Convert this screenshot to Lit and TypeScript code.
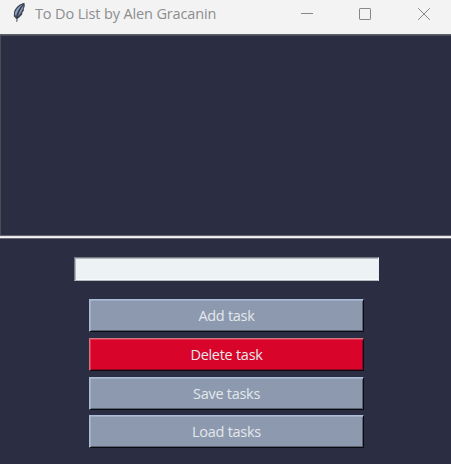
import { LitElement, html, svg, css } from "lit";
import { customElement, property } from "lit/decorators.js";

@customElement("title-bar")
export class TitleBar extends LitElement {
  static styles = css`
    :host { display: flex; height: 34px; background: #f3f3f3; color: #8d8d8f; }
    .feather { width: 14px; height: 24px; margin-left: 12px; flex: none; }
    .title {
      margin-left: 9px; height: 28px; white-space: nowrap;
      font: 14.5px/28px "Open Sans", "Noto Sans", sans-serif; letter-spacing: -0.14px;
    }
    .controls { display: flex; margin-left: auto; margin-right: -2px; }
    .controls svg { width: 58.5px; height: 28px; display: block; }
  `;
  render() {
    return html`
      <svg class="feather" viewBox="0 0 14 24">
        <path d="M12.4 2.8 C8 3.8 3.3 7.2 2 12.2 L1.8 16.2 L4.3 19 L6.8 18 L10.2 14.6 L10.3 12.7 L12 10.2 L11.7 9 L12.8 6 Z" fill="#3b4556"/>
        <path d="M10.6 4.4 C6.6 6.2 3.6 9.6 2.9 13.4 L3.9 16.6 C5 11.5 7.5 8 10.6 4.4 Z" fill="#8ba0bc"/>
        <path d="M11.7 5.2 L10.6 9.6 L8.7 13 L6.2 16.2 L5.3 16.4 C6.4 12 8.8 8 11.7 5.2 Z" fill="#8295af"/>
        <path d="M10.8 5 C7.6 9 5.6 13.5 4.7 21.8" fill="none" stroke="#303846" stroke-width="0.9"/>
      </svg>
      <span class="title">To Do List by Alen Gracanin</span>
      <div class="controls">
        ${[
          svg`<path d="M23 13.5H35"/>`,
          svg`<rect x="23.5" y="8.5" width="11" height="11" rx="0.6"/>`,
          svg`<path d="M23.2 8.2L34.8 19.8M34.8 8.2L23.2 19.8"/>`,
        ].map((g) => html`<svg viewBox="0 0 58.5 28" fill="none" stroke="#858789">${g}</svg>`)}
      </div>
    `;
  }
}

@customElement("task-button")
export class TaskButton extends LitElement {
  @property() label = "";
  @property({ reflect: true }) tone = "plain";
  static styles = css`
    :host { display: block; height: 33px; }
    .face {
      box-sizing: border-box; width: 100%; height: 33px; display: block; margin: 0; padding: 0;
      border: 1px solid; border-color: #a9bbd6 #090a10 #090a10 #a9bbd6; border-radius: 0;
      background: #8d99af; color: #e3e8ec; text-align: center;
      box-shadow: inset 1px 1px #9fadc5, inset -1px -1px #596273;
      font: 14.5px/30px "Open Sans", "Noto Sans", sans-serif; letter-spacing: -0.28px;
    }
    :host([tone="danger"]) .face {
      background: #d90429; border-color: #d5747f #160810 #160810 #d5747f;
      box-shadow: inset 1px 1px #df3650, inset -1px -1px #850820;
    }
  `;
  render() {
    return html`<button class="face">${this.label}</button>`;
  }
}

@customElement("app-root")
export class AppRoot extends LitElement {
  static styles = css`
    :host { display: flex; flex-direction: column; height: 464px; background: #2b2d42; overflow: hidden; }
    .list {
      box-sizing: border-box; height: 205px; flex: none;
      border-top: 1px solid #5b6168; border-bottom: 1px solid #666773;
      box-shadow: inset 0 -1px #f4f4f5, inset 0 -2px #e2e2e5, inset 0 -3px #626370, inset 1px 1px #4a4d58;
    }
    .entry {
      box-sizing: border-box; width: 305px; height: 24px; margin: 18px 0 0 74px; flex: none; padding: 0 4px;
      border: 1px solid; border-color: #777982 #e9edf0 #b5b7bc #777982; border-radius: 0; outline: none;
      background: #edf2f4; box-shadow: inset 1px 1px #b5b8bc, inset 0 -1px #fafbfc;
      font: 14px "Open Sans", sans-serif;
    }
    .actions { display: flex; flex-direction: column; gap: 6px; width: 275px; margin: 18px 0 0 89px; }
    .actions task-button:last-child { margin-top: -1px; }
  `;
  render() {
    return html`
      <title-bar></title-bar>
      <div class="list"></div>
      <input class="entry" type="text" />
      <div class="actions">
        <task-button label="Add task"></task-button>
        <task-button label="Delete task" tone="danger"></task-button>
        <task-button label="Save tasks"></task-button>
        <task-button label="Load tasks"></task-button>
      </div>
    `;
  }
}
